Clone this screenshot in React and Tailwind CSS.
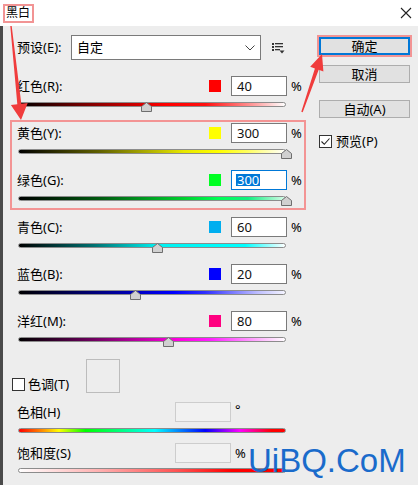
import React from "react";

const sliders = [
  { label: "红色(R):", swatch: "bg-[#ff0000]", value: "40", pct: 0.48, grad: "bg-[linear-gradient(to_right,#000_0%,#7a0000_25%,#ff0000_55%,#ff1010_70%,#ff9a9a_88%,#ffffff_100%)]" },
  { label: "黄色(Y):", swatch: "bg-[#ffff00]", value: "300", pct: 1, grad: "bg-[linear-gradient(to_right,#000_0%,#606000_30%,#e8e800_62%,#ffff00_75%,#ffff60_86%,#ffffff_100%)]" },
  { label: "绿色(G):", swatch: "bg-[#00ff22]", value: "300", pct: 1, focus: true, grad: "bg-[linear-gradient(to_right,#000_0%,#005a10_30%,#00d030_62%,#00ff55_75%,#10f080_86%,#d8fae8_100%)]" },
  { label: "青色(C):", swatch: "bg-[#00aeef]", value: "60", pct: 0.52, grad: "bg-[linear-gradient(to_right,#000_0%,#007070_28%,#00f0f0_52%,#00ffff_85%,#ffffff_100%)]" },
  { label: "蓝色(B):", swatch: "bg-[#0000ff]", value: "20", pct: 0.44, grad: "bg-[linear-gradient(to_right,#000_0%,#000080_30%,#0000ff_58%,#3030ff_70%,#c0c0ff_90%,#f4f4ff_100%)]" },
  { label: "洋红(M):", swatch: "bg-[#ff0080]", value: "80", pct: 0.56, grad: "bg-[linear-gradient(to_right,#000_0%,#700060_28%,#ff00e0_60%,#ff20ff_72%,#ffc0ff_92%,#ffffff_100%)]" },
];

function Thumb({ pct }) {
  return (
    <svg
      className="absolute top-0"
      style={{ left: pct * 268 - 5.5 }}
      width="11"
      height="10"
      viewBox="0 0 11 10"
    >
      <polygon points="5.5,0.5 10.5,4.5 10.5,9.5 0.5,9.5 0.5,4.5" fill="#d0d0d0" stroke="#6e6e6e" strokeWidth="1" strokeLinejoin="round" />
    </svg>
  );
}

function Track({ grad, pct, mt = "mt-[6px]" }) {
  return (
    <div className={`relative ${mt} ml-[1px] w-[268px] h-[5px]`}>
      <div className={`h-full w-full rounded-full border border-[#8c8c8c] ${grad}`} />
      {pct != null && <Thumb pct={pct} />}
    </div>
  );
}

function SliderRow({ s }) {
  return (
    <div className="h-[47px]">
      <div className="flex h-[20px] items-center">
        <span className="w-[192px] text-[13px] leading-none">{s.label}</span>
        <span className={`w-[12px] h-[12px] mr-[10px] ${s.swatch}`} />
        {s.focus ? (
          <div className="w-[56px] h-[20px] border border-[#0078d7] bg-white flex items-center pl-[4px]">
            <span className="bg-[#0078d7] text-white text-[13px] leading-[12px] px-[1px]">{s.value}</span>
          </div>
        ) : (
          <div className="w-[56px] h-[20px] border border-[#7a7a7a] bg-white flex items-center pl-[5px] text-[13px] leading-none text-[#111]">
            {s.value}
          </div>
        )}
        <span className="ml-[4px] text-[13px] leading-none">%</span>
      </div>
      <Track grad={s.grad} pct={s.pct} />
    </div>
  );
}

export default function App() {
  return (
    <div className="relative w-[418px] h-[485px] overflow-hidden bg-[#ededed] text-black font-['Noto_Sans','Noto_Sans_CJK_SC',sans-serif]">
      {/* Title bar */}
      <div className="h-[26px] bg-white flex items-center justify-between pl-[3px] pr-[6px]">
        <div className="h-[19px] w-[31px] border-2 border-[#f29494] flex items-center pl-[1px] text-[12px] leading-none">
          黑白
        </div>
        <svg width="12" height="12" viewBox="0 0 12 12" className="mb-[1px]">
          <path d="M1 1 L11 11 M11 1 L1 11" stroke="#222" strokeWidth="1.1" />
        </svg>
      </div>

      {/* Body */}
      <div className="flex h-[459px] border-l-[3px] border-[#4a4a4a]">
        {/* Left column */}
        <div className="w-[302px] pl-[14px] flex flex-col">
          {/* Preset */}
          <div className="mt-[9px] h-[25px] flex items-center">
            <span className="w-[54px] text-[13px] leading-none">预设(E):</span>
            <div className="w-[190px] h-[25px] border border-[#7a7a7a] bg-white flex items-center justify-between pl-[5px] pr-[5px]">
              <span className="text-[13px] leading-none">自定</span>
              <svg width="10" height="6" viewBox="0 0 10 6">
                <path d="M0.5 0.5 L5 5 L9.5 0.5" fill="none" stroke="#444" strokeWidth="1" />
              </svg>
            </div>
            <svg width="13" height="11" viewBox="0 0 13 11" className="ml-[11px] mt-[1px]">
              <rect x="0" y="0" width="2" height="2" fill="#333" />
              <rect x="3" y="0" width="8" height="1.3" fill="#333" />
              <rect x="0" y="3" width="2" height="2" fill="#333" />
              <rect x="3" y="3" width="8" height="1.3" fill="#333" />
              <rect x="0" y="6" width="2" height="2" fill="#333" />
              <rect x="3" y="6" width="5" height="1.3" fill="#333" />
              <polygon points="7.5,7.5 12.5,7.5 10,10.5" fill="#333" />
            </svg>
          </div>

          <div className="mt-[16px]">
            {sliders.map((s) => (
              <SliderRow key={s.label} s={s} />
            ))}
          </div>

          {/* Tone */}
          <div className="mt-[1px] h-[34px] flex items-center -ml-[5px]">
            <span className="w-[13px] h-[13px] border border-[#333] bg-white mt-[16px]" />
            <span className="ml-[3px] text-[13px] leading-none mt-[16px]">色调(T)</span>
            <div className="ml-[17px] w-[34px] h-[34px] border border-[#bcbcbc]" />
          </div>

          {/* Hue */}
          <div className="mt-[9px] h-[20px] flex items-center">
            <span className="w-[158px] text-[13px] leading-none">色相(H)</span>
            <div className="w-[56px] h-[20px] border border-[#cdcdcd] bg-[#f1f1f1]" />
            <span className="ml-[4px] text-[13px] leading-none self-start mt-[1px]">°</span>
          </div>
          <Track mt="mt-[6px]" grad="bg-[linear-gradient(to_right,#ff0000_0%,#ff8000_8%,#ffff00_15%,#00ff00_25%,#00ff80_38%,#00ffff_51%,#0000ff_70%,#ff00ff_83%,#ff0000_95%,#ff0000_100%)]" />

          {/* Saturation */}
          <div className="mt-[10px] h-[20px] flex items-center">
            <span className="w-[158px] text-[13px] leading-none">饱和度(S)</span>
            <div className="w-[56px] h-[20px] border border-[#cdcdcd] bg-[#f1f1f1]" />
            <span className="ml-[4px] text-[13px] leading-none">%</span>
          </div>
          <Track mt="mt-[5px]" grad="bg-[linear-gradient(to_right,#ffffff_0%,#ffb0b0_30%,#ff5050_60%,#ff0000_80%,#ff0000_100%)]" />
        </div>

        {/* Right column */}
        <div className="pl-[14px] flex flex-col">
          <div className="mt-[9px] -ml-[2px] w-[95px] h-[22px] border-2 border-[#f29494]">
            <div className="w-[91px] h-[18px] border-2 border-[#0078d7] bg-[#e1e1e1] flex items-center justify-center text-[13px] leading-none">
              确定
            </div>
          </div>
          <div className="mt-[8px] w-[91px] h-[18px] border border-[#adadad] bg-[#e1e1e1] flex items-center justify-center text-[13px] leading-none">
            取消
          </div>
          <div className="mt-[17px] w-[91px] h-[18px] border border-[#adadad] bg-[#e1e1e1] flex items-center justify-center text-[13px] leading-none">
            自动(A)
          </div>
          <div className="mt-[17px] flex items-center">
            <span className="w-[13px] h-[13px] border border-[#333] bg-white flex items-center justify-center">
              <svg width="11" height="11" viewBox="0 0 11 11">
                <path d="M1.5 5.5 L4.3 8.3 L9.5 2.5" fill="none" stroke="#222" strokeWidth="1.1" />
              </svg>
            </span>
            <span className="ml-[4px] text-[13px] leading-none">预览(P)</span>
          </div>
        </div>
      </div>

      {/* Annotation box around yellow/green */}
      <div className="absolute left-[10px] top-[120px] w-[296px] h-[90px] border-2 border-[#f39494] pointer-events-none" />

      {/* Arrows */}
      <svg className="absolute left-0 top-0 pointer-events-none" width="418" height="485" viewBox="0 0 418 485">
        <polygon points="10.3,26.1 11.7,25.9 21.3,103.8 27.7,103.1 21,120 10.9,104.9 17.3,104.2" fill="#f03c3c" />
        <polygon points="301.3,111.8 314.9,68.4 310.2,66.8 322,54 323.4,71.4 318.7,69.8 302.7,112.2" fill="#f03c3c" />
      </svg>

      {/* Watermark */}
      <div className="absolute left-[248px] top-[444px] text-[33px] leading-none text-[#1a6bcb] font-['Liberation_Sans',sans-serif]">
        UiBQ.CoM
      </div>
    </div>
  );
}
